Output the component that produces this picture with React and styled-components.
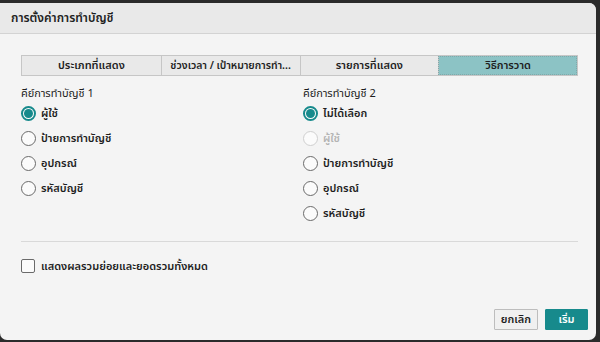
import React, { useState } from "react";
import styled, { createGlobalStyle } from "styled-components";

const GlobalStyle = createGlobalStyle`
  html, body {
    margin: 0;
    padding: 0;
    background: #2b2b2b;
    overflow: hidden;
  }
  body {
    font-family: "Noto Sans Thai", "Noto Sans", "DejaVu Sans", sans-serif;
    font-size: 11px;
    color: #1e1e1e;
  }
`;

const Screen = styled.div`
  width: 600px;
  height: 342px;
  padding: 3px 4px 2px 0;
  box-sizing: border-box;
`;

const Dialog = styled.div`
  width: 100%;
  height: 100%;
  display: flex;
  flex-direction: column;
  background: #f4f4f4;
  border-radius: 0 7px 7px 7px;
  overflow: hidden;
`;

const TitleBar = styled.div`
  height: 30px;
  display: flex;
  align-items: center;
  padding-left: 11px;
  background: #e9e9e9;
  border-bottom: 1px solid #d3d3d3;
  font-size: 12px;
  font-weight: 600;
`;

const Body = styled.div`
  flex: 1;
  display: flex;
  flex-direction: column;
  padding: 21px 18px 0 21px;
`;

const Tabs = styled.div`
  display: grid;
  grid-template-columns: repeat(4, 1fr);
  height: 19px;
  border: 1px solid #c6c6c6;
  background: #e9e9e9;
`;

const Tab = styled.div`
  display: flex;
  align-items: center;
  justify-content: center;
  padding: 0 2px;
  white-space: nowrap;
  font-weight: 600;
  font-size: ${({ $long }) => ($long ? "10.5px" : "11px")};
  border-left: ${({ $first }) => ($first ? "none" : "1px solid #c6c6c6")};
  background: ${({ $active }) => ($active ? "#8cc3c5" : "transparent")};
  outline: ${({ $active }) => ($active ? "1px dotted #7fa9aa" : "none")};
  outline-offset: -1px;
`;

const Columns = styled.div`
  display: grid;
  grid-template-columns: 282px 1fr;
  align-items: start;
  padding-top: 9px;
  height: 165px;
  box-sizing: border-box;
`;

const Column = styled.div`
  display: flex;
  flex-direction: column;
`;

const GroupLabel = styled.div`
  height: 16px;
  display: flex;
  align-items: center;
`;

const RadioRow = styled.label`
  height: 25px;
  display: flex;
  align-items: center;
  gap: 5px;
  font-weight: 600;
  color: ${({ $disabled }) => ($disabled ? "#b4b4b4" : "#1e1e1e")};
`;

const RadioCircle = styled.span`
  width: 15px;
  height: 15px;
  box-sizing: border-box;
  border-radius: 50%;
  flex-shrink: 0;
  display: flex;
  align-items: center;
  justify-content: center;
  border: ${({ $checked, $disabled }) =>
    $checked ? "2px solid #178a8c" : $disabled ? "1.5px solid #cfcfcf" : "1.5px solid #6a6a6a"};
  background: #fbfbfb;
  &::after {
    content: "";
    width: 9px;
    height: 9px;
    border-radius: 50%;
    background: #178a8c;
    display: ${({ $checked }) => ($checked ? "block" : "none")};
  }
`;

const Divider = styled.div`
  height: 1px;
  background: #d9d9d9;
`;

const CheckRow = styled.label`
  height: 16px;
  display: flex;
  align-items: center;
  gap: 6px;
  margin-top: 16px;
  font-weight: 600;
`;

const CheckBox = styled.span`
  width: 14px;
  height: 14px;
  box-sizing: border-box;
  border: 1.5px solid #6a6a6a;
  border-radius: 2px;
  background: #fbfbfb;
`;

const Footer = styled.div`
  margin-top: auto;
  margin-right: -10px;
  display: flex;
  justify-content: flex-end;
  gap: 7px;
  padding-bottom: 10px;
`;

const Button = styled.button`
  height: 21px;
  padding: 0 6px;
  min-width: ${({ $primary }) => ($primary ? "43px" : "42px")};
  font-family: inherit;
  font-size: 11px;
  font-weight: 600;
  border-radius: 1px;
  border: 1px solid ${({ $primary }) => ($primary ? "#178a8c" : "#bdbdbd")};
  background: ${({ $primary }) => ($primary ? "#178a8c" : "#f0f0f0")};
  color: ${({ $primary }) => ($primary ? "#ffffff" : "#1e1e1e")};
`;

// the second caption is truncated by the app itself, as in the screenshot
const tabs = ["ประเภทที่แสดง", "ช่วงเวลา / เป้าหมายการทำ...", "รายการที่แสดง", "วิธีการวาด"];

const keyOne = [
  { label: "ผู้ใช้", checked: true },
  { label: "ป้ายการทำบัญชี" },
  { label: "อุปกรณ์" },
  { label: "รหัสบัญชี" },
];

const keyTwo = [
  { label: "ไม่ได้เลือก", checked: true },
  { label: "ผู้ใช้", disabled: true },
  { label: "ป้ายการทำบัญชี" },
  { label: "อุปกรณ์" },
  { label: "รหัสบัญชี" },
];

function RadioGroup({ title, items }) {
  return (
    <Column>
      <GroupLabel>{title}</GroupLabel>
      {items.map((item) => (
        <RadioRow key={item.label} $disabled={item.disabled}>
          <RadioCircle $checked={item.checked} $disabled={item.disabled} />
          {item.label}
        </RadioRow>
      ))}
    </Column>
  );
}

export default function App() {
  const [active] = useState(3);
  return (
    <Screen>
      <GlobalStyle />
      <Dialog>
        <TitleBar>การตั้งค่าการทำบัญชี</TitleBar>
        <Body>
          <Tabs>
            {tabs.map((t, i) => (
              <Tab key={t} $first={i === 0} $long={i === 1} $active={i === active}>
                {t}
              </Tab>
            ))}
          </Tabs>
          <Columns>
            <RadioGroup title="คีย์การทำบัญชี 1" items={keyOne} />
            <RadioGroup title="คีย์การทำบัญชี 2" items={keyTwo} />
          </Columns>
          <Divider />
          <CheckRow>
            <CheckBox />
            แสดงผลรวมย่อยและยอดรวมทั้งหมด
          </CheckRow>
          <Footer>
            <Button>ยกเลิก</Button>
            <Button $primary>เริ่ม</Button>
          </Footer>
        </Body>
      </Dialog>
    </Screen>
  );
}
